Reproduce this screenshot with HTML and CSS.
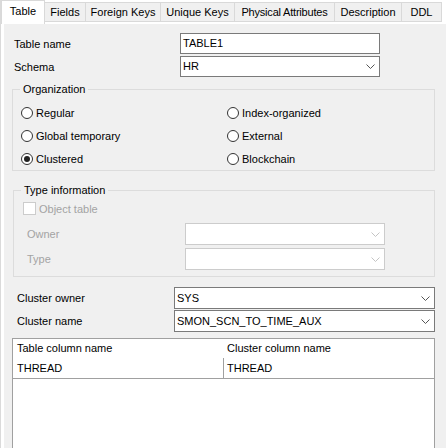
FILE: index.html
```html
<!DOCTYPE html>
<html>
<head>
<meta charset="utf-8">
<link rel="stylesheet" href="styles.css">
</head>
<body>
<div class="window">
  <div class="tabs">
    <div class="tab active">Table</div>
    <div class="tab">Fields</div>
    <div class="tab">Foreign Keys</div>
    <div class="tab">Unique Keys</div>
    <div class="tab tight">Physical Attributes</div>
    <div class="tab">Description</div>
    <div class="tab">DDL</div>
  </div>
  <div class="panel">
    <div class="field-row">
      <span class="label">Table name</span>
      <div class="textbox">TABLE1</div>
    </div>
    <div class="field-row second">
      <span class="label">Schema</span>
      <div class="combo"><span>HR</span><svg class="chev" width="9" height="5" viewBox="0 0 9 5"><polyline points="0.5,0.5 4.5,4.5 8.5,0.5" fill="none" stroke="#555" stroke-width="1"/></svg></div>
    </div>

    <fieldset class="group org">
      <legend>Organization</legend>
      <div class="radios">
        <div class="radio"><span class="circle"></span>Regular</div>
        <div class="radio"><span class="circle"></span>Index-organized</div>
        <div class="radio"><span class="circle"></span>Global temporary</div>
        <div class="radio"><span class="circle"></span>External</div>
        <div class="radio"><span class="circle checked"></span>Clustered</div>
        <div class="radio"><span class="circle"></span>Blockchain</div>
      </div>
    </fieldset>

    <fieldset class="group typeinfo">
      <legend>Type information</legend>
      <div class="check-row"><span class="checkbox"></span><span class="disabled">Object table</span></div>
      <div class="sub-row first">
        <span class="disabled sub-label">Owner</span>
        <div class="combo off"><span></span><svg class="chev" width="9" height="5" viewBox="0 0 9 5"><polyline points="0.5,0.5 4.5,4.5 8.5,0.5" fill="none" stroke="#c4c4c4" stroke-width="1"/></svg></div>
      </div>
      <div class="sub-row">
        <span class="disabled sub-label">Type</span>
        <div class="combo off"><span></span><svg class="chev" width="9" height="5" viewBox="0 0 9 5"><polyline points="0.5,0.5 4.5,4.5 8.5,0.5" fill="none" stroke="#c4c4c4" stroke-width="1"/></svg></div>
      </div>
    </fieldset>

    <div class="cluster-row first">
      <span class="label cl">Cluster owner</span>
      <div class="combo tall"><span>SYS</span><svg class="chev" width="9" height="5" viewBox="0 0 9 5"><polyline points="0.5,0.5 4.5,4.5 8.5,0.5" fill="none" stroke="#555" stroke-width="1"/></svg></div>
    </div>
    <div class="cluster-row">
      <span class="label cl">Cluster name</span>
      <div class="combo tall"><span>SMON_SCN_TO_TIME_AUX</span><svg class="chev" width="9" height="5" viewBox="0 0 9 5"><polyline points="0.5,0.5 4.5,4.5 8.5,0.5" fill="none" stroke="#555" stroke-width="1"/></svg></div>
    </div>

    <div class="grid">
      <div class="grid-head">
        <div class="cell">Table column name</div>
        <div class="cell">Cluster column name</div>
      </div>
      <div class="grid-row">
        <div class="cell">THREAD</div>
        <div class="cell divided">THREAD</div>
      </div>
    </div>
  </div>
</div>
</body>
</html>
```
FILE: styles.css
```css
html, body {
  margin: 0;
  padding: 0;
  background: #ffffff;
}
body {
  font-family: "Liberation Sans", Arial, sans-serif;
  font-size: 11px;
  color: #000;
  overflow: hidden;
}
.window {
  height: 448px;
  border-left: 1px solid #dadada;
  display: flex;
  flex-direction: column;
  box-sizing: border-box;
}
.tabs {
  display: flex;
  height: 24px;
  flex: 0 0 24px;
  align-items: flex-start;
}
.tab {
  box-sizing: border-box;
  margin-top: 2px;
  height: 20px;
  line-height: 18px;
  border: 1px solid #d9d9d9;
  border-left: none;
  background: #f0f0f0;
  text-align: center;
  white-space: nowrap;
}
.tab.active {
  margin-top: 0;
  height: 24px;
  line-height: 18px;
  padding-top: 1px;
  background: #fff;
  border-left: 1px solid #d9d9d9;
  border-bottom: none;
}
.tab.tight { letter-spacing: -0.2px; }
.tab:nth-child(1) { width: 44px; }
.tab:nth-child(2) { width: 41px; }
.tab:nth-child(3) { width: 75px; }
.tab:nth-child(4) { width: 74px; }
.tab:nth-child(5) { width: 100px; }
.tab:nth-child(6) { width: 67px; }
.tab:nth-child(7) { width: 40px; }

.panel {
  flex: 1;
  margin-left: 3px;
  background: #f0f0f0;
  padding: 9px 11px 0 8px;
  display: flex;
  flex-direction: column;
  min-height: 0;
}
.field-row {
  display: grid;
  grid-template-columns: 168px 200px;
  align-items: center;
  height: 21px;
}
.field-row.second { margin-top: 2px; }
.label { padding-left: 2px; white-space: nowrap; }
.textbox, .combo {
  box-sizing: border-box;
  height: 21px;
  border: 1px solid #7a7a7a;
  background: #fff;
  padding-left: 2px;
  line-height: 19px;
  white-space: nowrap;
}
.combo {
  display: flex;
  justify-content: space-between;
  align-items: center;
  padding-right: 4px;
}
.combo.off { border-color: #cccccc; height: 22px; }
.combo.tall { height: 22px; }
.chev { display: block; flex: 0 0 auto; }

.group {
  margin: 6px 0 0;
  padding: 7px 0 1px 7px;
  border: 1px solid #dcdcdc;
  min-width: 0;
}
.group legend {
  padding: 0 3px;
  line-height: 13px;
}
.radios {
  display: grid;
  grid-template-columns: 206px 1fr;
  row-gap: 3px;
}
.radio {
  display: flex;
  align-items: center;
  height: 20px;
  gap: 3px;
  white-space: nowrap;
}
.circle {
  box-sizing: border-box;
  width: 12px;
  height: 12px;
  margin-left: 1px;
  border: 1px solid #333;
  border-radius: 50%;
  background: #fff;
  display: flex;
  align-items: center;
  justify-content: center;
}
.circle.checked::after {
  content: "";
  width: 6px;
  height: 6px;
  border-radius: 50%;
  background: #222;
}

.typeinfo {
  margin: 13px 0 0 1px;
  padding: 4px 0 6px 7px;
}
.disabled { color: #a3a3a3; }
.check-row {
  display: flex;
  align-items: center;
  height: 15px;
  gap: 3px;
}
.checkbox {
  box-sizing: border-box;
  width: 13px;
  height: 13px;
  margin-left: 2px;
  border: 1px solid #cccccc;
  background: #fff;
}
.sub-row {
  display: grid;
  grid-template-columns: 164px 200px;
  align-items: center;
  margin-top: 3px;
}
.sub-row.first { margin-top: 7px; }
.sub-label { padding-left: 6px; }

.cluster-row {
  display: grid;
  grid-template-columns: 162px 1fr;
  align-items: center;
  margin-top: 1px;
}
.cluster-row.first { margin-top: 10px; }
.label.cl { padding-left: 5px; }

.grid {
  flex: 1;
  margin-top: 6px;
  border: 1px solid #a0a0a0;
  border-bottom: none;
  background: #fff;
}
.grid-head, .grid-row {
  display: grid;
  grid-template-columns: 210px 1fr;
}
.grid-head { height: 19px; line-height: 19px; }
.grid-row {
  height: 20px;
  line-height: 20px;
  border-bottom: 1px solid #a0a0a0;
}
.cell { padding-left: 4px; white-space: nowrap; }
.grid-head .cell:nth-child(2) { padding-left: 4px; }
.cell.divided { border-left: 1px solid #a0a0a0; padding-left: 3px; }
```
